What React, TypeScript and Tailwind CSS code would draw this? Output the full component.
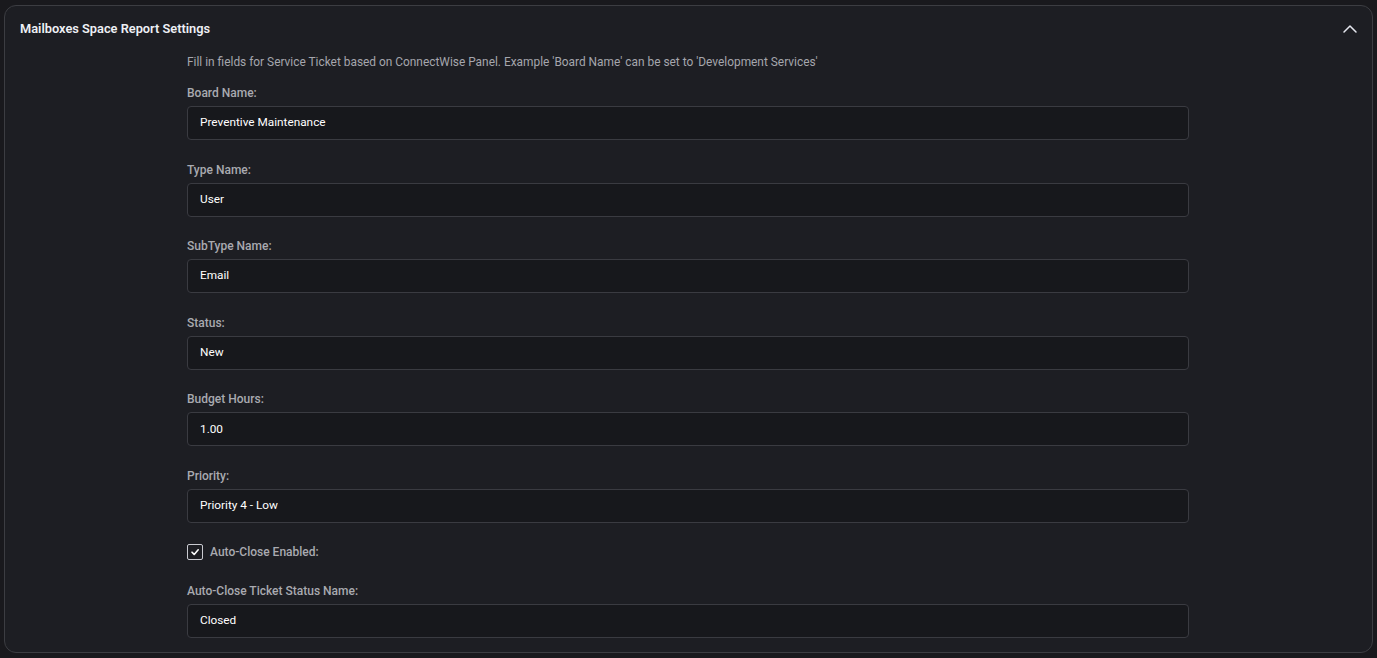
import React from "react";

const fields: { label: string; value: string }[] = [
  { label: "Board Name:", value: "Preventive Maintenance" },
  { label: "Type Name:", value: "User" },
  { label: "SubType Name:", value: "Email" },
  { label: "Status:", value: "New" },
  { label: "Budget Hours:", value: "1.00" },
  { label: "Priority:", value: "Priority 4 - Low" },
];

function Field({ label, value }: { label: string; value: string }) {
  return (
    <div className="flex flex-col">
      <label className="text-[12px] leading-[16px] text-[#a9aab0] font-medium">{label}</label>
      <div className="mt-[5px] h-[34px] rounded-[4px] border border-[#3a3b41] bg-[#17181c] flex items-center px-[12px] text-[11.8px] text-white font-normal">
        {value}
      </div>
    </div>
  );
}

export default function App() {
  return (
    <div
      className="w-[1377px] h-[658px] bg-[#19191d] pt-[5px] px-[4px] overflow-hidden"
      style={{ fontFamily: "Roboto, 'Noto Sans', sans-serif" }}
    >
      <div className="h-[648px] rounded-[12px] border border-[#3c3d42] bg-[#1d1e23] flex flex-col">
        <div className="flex items-center justify-between h-[46px] pl-[15px] pr-[14px]">
          <span className="text-[12.8px] font-semibold text-[#eef0f5]">Mailboxes Space Report Settings</span>
          <svg width="16" height="16" viewBox="0 0 16 16" fill="none" className="mt-[-1px]">
            <path d="M2 11 L8 5 L14 11" stroke="#e6e8f0" strokeWidth="1.5" strokeLinecap="round" strokeLinejoin="round" />
          </svg>
        </div>
        <div className="w-[1002px] ml-[182px] flex flex-col">
          <p className="text-[11.9px] leading-[16px] text-[#a5a6ad] mt-[2px]">
            Fill in fields for Service Ticket based on ConnectWise Panel. Example 'Board Name' can be set to 'Development Services'
          </p>
          <div className="mt-[15px] flex flex-col gap-[21.6px]">
            {fields.map((f) => (
              <Field key={f.label} label={f.label} value={f.value} />
            ))}
          </div>
          <div className="mt-[21px] flex items-center gap-[7px] h-[16px]">
            <div className="w-[16px] h-[16px] rounded-[2px] border border-[#c9cad0] flex items-center justify-center">
              <svg width="10" height="10" viewBox="0 0 10 10" fill="none">
                <path d="M2 5.2 L4.2 7.4 L8.2 2.8" stroke="#ffffff" strokeWidth="1.6" strokeLinecap="round" strokeLinejoin="round" />
              </svg>
            </div>
            <span className="text-[12px] text-[#a9aab0] font-medium">Auto-Close Enabled:</span>
          </div>
          <div className="mt-[23px]">
            <Field label="Auto-Close Ticket Status Name:" value="Closed" />
          </div>
        </div>
      </div>
    </div>
  );
}
